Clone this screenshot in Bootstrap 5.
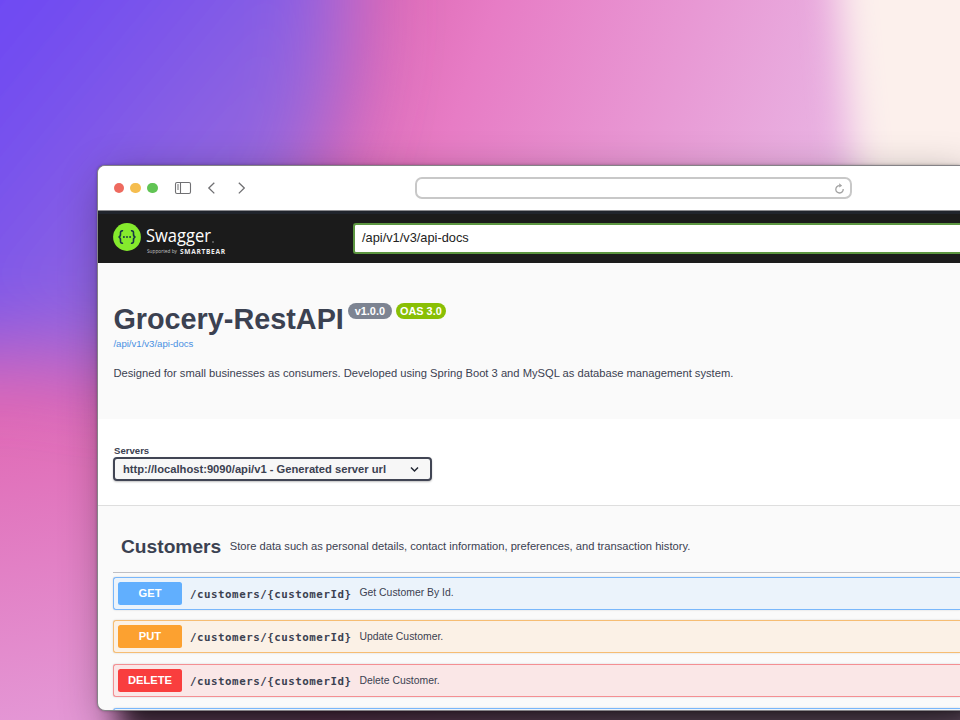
<!DOCTYPE html>
<html lang="en">
<head>
<meta charset="utf-8">
<meta name="viewport" content="width=device-width, initial-scale=1">
<title>Grocery-RestAPI</title>
<link href="https://cdn.jsdelivr.net/npm/bootstrap@5.3.0/dist/css/bootstrap.min.css" rel="stylesheet">
<style>
body{width:960px;height:720px;font-family:"Liberation Sans",Arial,sans-serif;color:#3b4151;background:#e58acb}
.wallpaper{position:absolute;inset:0;z-index:0}
.stage{position:relative;z-index:1;padding:165px 0 0 97px}
.browser{height:546px;border:1px solid #858387;border-right:0;border-radius:8px 0 0 8px;background:#fafafa;
 box-shadow:0 0 3px rgba(0,0,0,.3),24px 24px 26px 0 rgba(0,0,0,.72),10px 16px 46px rgba(0,0,0,.42)}
.chrome-bar{height:45px;border-bottom:1px solid #8b8b8f;background:#fff;padding-left:15.7px}
.dot{width:10.6px;height:10.6px;border-radius:50%}
.address{width:437px;height:22px;border:2px solid #c8c8c8;border-radius:7px;margin-left:165.3px;padding-right:4px}
.topbar{height:52px;background:#1b1b1b;border-top:3px solid #20242c;padding:0 0 0 15px}
.topbar svg{margin-top:3px}
.spec-input{min-width:0;height:31px;border:2px solid #5c9640;border-right:0;border-radius:3px 0 0 3px;background:#fff;color:#222;font-size:12.8px;padding:0 0 2px 7px;margin-left:126px}
.info{height:156px;padding:37px 0 0 15.4px}
.api-title{font-size:28.8px;line-height:38px;font-weight:700;margin:0}
.tag{height:16px;line-height:16px;border-radius:8px;color:#fff;font-size:10.9px;font-weight:700;text-align:center;margin-top:2.5px}
.tag-v{width:44px;background:#7d8492;margin-left:4px}
.tag-oas{width:50px;background:#89bf04;margin-left:4px}
.doc-link{font-size:9.6px;line-height:12px;color:#4990e2;text-decoration:none}
.desc{font-size:11.18px;line-height:16px;margin:15px 0 0;white-space:nowrap}
.servers{height:87px;background:#fff;border-bottom:1px solid #dedede;padding:26px 0 0 15px}
.servers label{font-size:9.6px;line-height:11px;font-weight:700;padding-left:1px}
.server-box{width:319px;height:24px;border:2px solid #414554;border-radius:4px;background:#f7f7f7;box-shadow:0 1px 2px rgba(0,0,0,.25);font-size:11.2px;font-weight:700;padding:0 11px 0 8px;margin-top:1px}
.ops{padding-left:15px}
.section-head{height:67px;border-bottom:1px solid #bfbfc4;padding:15px 0 0 8px;margin-bottom:3.6px}
.section-head h2{font-size:19.2px;font-weight:700;margin:0}
.section-head span{font-size:11.17px;margin-left:8.5px}
.op{height:33px;border:1px solid;border-right:0;border-radius:3px 0 0 3px;margin-bottom:10.8px;box-shadow:0 0 2px rgba(0,0,0,.17);padding-left:4px}
.verb{width:64px;height:23px;line-height:23px;border-radius:2.5px;color:#fff;font-size:11.2px;font-weight:700;text-align:center}
.op code{font:700 10.8px "DejaVu Sans Mono",monospace;letter-spacing:.52px;color:#3b4151;margin-left:8px;padding-top:2px}
.op span{font-size:10.4px;margin-left:8px}
.op-get{border-color:#79b7fb;background:#ebf3fb}.op-get .verb{background:#61affe}
.op-put{border-color:#f6bd73;background:#fbf1e6}.op-put .verb{background:#fca130}
.op-delete{border-color:#f48f93;background:#fae7e7}.op-delete .verb{background:#f93e3e}
</style>
</head>
<body class="overflow-hidden position-relative">
<svg class="wallpaper" width="960" height="720" viewBox="0 0 960 720" aria-hidden="true">
 <defs>
  <linearGradient id="pink" gradientUnits="userSpaceOnUse" x1="380" y1="0" x2="850" y2="170"><stop offset="0" stop-color="#de6ab6"/><stop offset=".22" stop-color="#e77cc5"/><stop offset="1" stop-color="#e9b6e4"/></linearGradient>
  <linearGradient id="pinkLeft" gradientUnits="userSpaceOnUse" x1="0" y1="410" x2="60" y2="720"><stop offset="0" stop-color="#e069b5"/><stop offset="1" stop-color="#e497d5"/></linearGradient>
  <linearGradient id="violet" gradientUnits="userSpaceOnUse" x1="0" y1="0" x2="220" y2="180"><stop offset="0" stop-color="#6d48f4"/><stop offset=".5" stop-color="#7c56ea"/><stop offset="1" stop-color="#9266de"/></linearGradient>
  <filter id="soft" x="-50%" y="-50%" width="200%" height="200%"><feGaussianBlur stdDeviation="42"/></filter>
  <filter id="edge" x="-50%" y="-50%" width="200%" height="200%"><feGaussianBlur stdDeviation="18"/></filter>
 </defs>
 <rect width="960" height="720" fill="url(#pink)"/>
 <rect y="320" width="300" height="400" fill="url(#pinkLeft)"/>
 <path d="M-200-200H345L345 0Q350 100 300 200L130 380Q60 350 0 355L-200 360Z" fill="url(#violet)" filter="url(#soft)"/>
 <path d="M830-100Q843 60 861 220L875 400H1200V-100Z" fill="#fcf0ec" filter="url(#edge)"/>
</svg>
<main class="stage">
 <div class="browser overflow-hidden">
  <div class="chrome-bar d-flex align-items-center">
   <div class="d-flex" style="gap:6.2px"><i class="dot" style="background:#ee6a5f"></i><i class="dot" style="background:#f5bd4f"></i><i class="dot" style="background:#61c454"></i></div>
   <svg width="92" height="18" viewBox="0 0 92 18" fill="none" stroke="#707073" stroke-width="1.1" aria-hidden="true">
    <rect x="17.5" y="3.5" width="15" height="11" rx="1.5"/><path d="M22.5 3.5v11"/><path d="M19 6h2M19 8h2M19 10h2" stroke-width="1"/>
    <path d="M56.3 3.7 50.8 9l5.5 5.4M80.8 3.7 86.3 9l-5.5 5.4" stroke-width="1.3"/>
   </svg>
   <div class="address d-flex align-items-center justify-content-end">
    <svg width="13" height="13" viewBox="0 0 13 13" fill="none" stroke="#a3a3a3" stroke-width="1.3" aria-hidden="true"><path d="M10.2 7A3.7 3.7 0 1 1 6.5 3.6"/><path d="M6.2 1.2 9.2 3.8 6.2 5.6z" fill="#a3a3a3" stroke="none"/></svg>
   </div>
  </div>
  <div class="topbar d-flex align-items-center">
   <svg class="flex-shrink-0" width="114" height="36" viewBox="0 0 114 36" role="img" aria-label="Swagger">
    <circle cx="14" cy="15" r="13.9" fill="#85ea2d"/>
    <g fill="none" stroke="#173647" stroke-width="1.6"><path d="M10.1 8.8C7.3 8.5 7.4 10 7.5 12c.1 1.8-.3 2.7-1.9 3 1.6.3 2 1.2 1.9 3-.1 2-.2 3.5 2.6 3.2M17.9 8.8c2.8-.3 2.7 1.2 2.6 3.2-.1 1.8.3 2.7 1.9 3-1.6.3-2 1.2-1.9 3 .1 2 .2 3.5-2.6 3.2"/></g>
    <g fill="#173647"><circle cx="10.9" cy="15" r=".95"/><circle cx="14" cy="15" r=".95"/><circle cx="17.1" cy="15" r=".95"/></g>
    <text x="33" y="20.4" fill="#fff" font-family="Open Sans, sans-serif" font-size="18" textLength="65" lengthAdjust="spacingAndGlyphs">Swagger</text>
    <circle cx="100" cy="20" r=".7" fill="#bbb"/>
    <text x="34" y="31.3" fill="#c4c4c4" font-family="Open Sans, sans-serif" font-size="5.5" textLength="30" lengthAdjust="spacingAndGlyphs">Supported by</text>
    <text x="67" y="31.5" fill="#eee" font-family="Open Sans, sans-serif" font-size="6.6" font-weight="700" textLength="45" lengthAdjust="spacing">SMARTBEAR</text>
   </svg>
   <div class="spec-input d-flex align-items-center flex-grow-1">/api/v1/v3/api-docs</div>
  </div>
  <section class="info">
   <div class="d-flex align-items-start"><h1 class="api-title">Grocery-RestAPI</h1><span class="tag tag-v">v1.0.0</span><span class="tag tag-oas">OAS 3.0</span></div>
   <a class="doc-link d-block" href="#">/api/v1/v3/api-docs</a>
   <p class="desc">Designed for small businesses as consumers. Developed using Spring Boot 3 and MySQL as database management system.</p>
  </section>
  <section class="servers">
   <label class="d-block">Servers</label>
   <div class="server-box d-flex align-items-center justify-content-between">http://localhost:9090/api/v1 - Generated server url
    <svg width="9" height="7" viewBox="0 0 9 7" fill="none" stroke="#222733" stroke-width="1.5" aria-hidden="true"><path d="M1 1.5 4.5 5 8 1.5"/></svg></div>
  </section>
  <section class="ops">
   <div class="section-head d-flex align-items-center"><h2>Customers</h2><span>Store data such as personal details, contact information, preferences, and transaction history.</span></div>
   <div class="op op-get d-flex align-items-center"><div class="verb">GET</div><code>/customers/{customerId}</code><span>Get Customer By Id.</span></div>
   <div class="op op-put d-flex align-items-center"><div class="verb">PUT</div><code>/customers/{customerId}</code><span>Update Customer.</span></div>
   <div class="op op-delete d-flex align-items-center"><div class="verb">DELETE</div><code>/customers/{customerId}</code><span>Delete Customer.</span></div>
   <div class="op op-get"></div>
  </section>
 </div>
</main>
<script src="https://cdn.jsdelivr.net/npm/bootstrap@5.3.0/dist/js/bootstrap.bundle.min.js"></script>
</body>
</html>
